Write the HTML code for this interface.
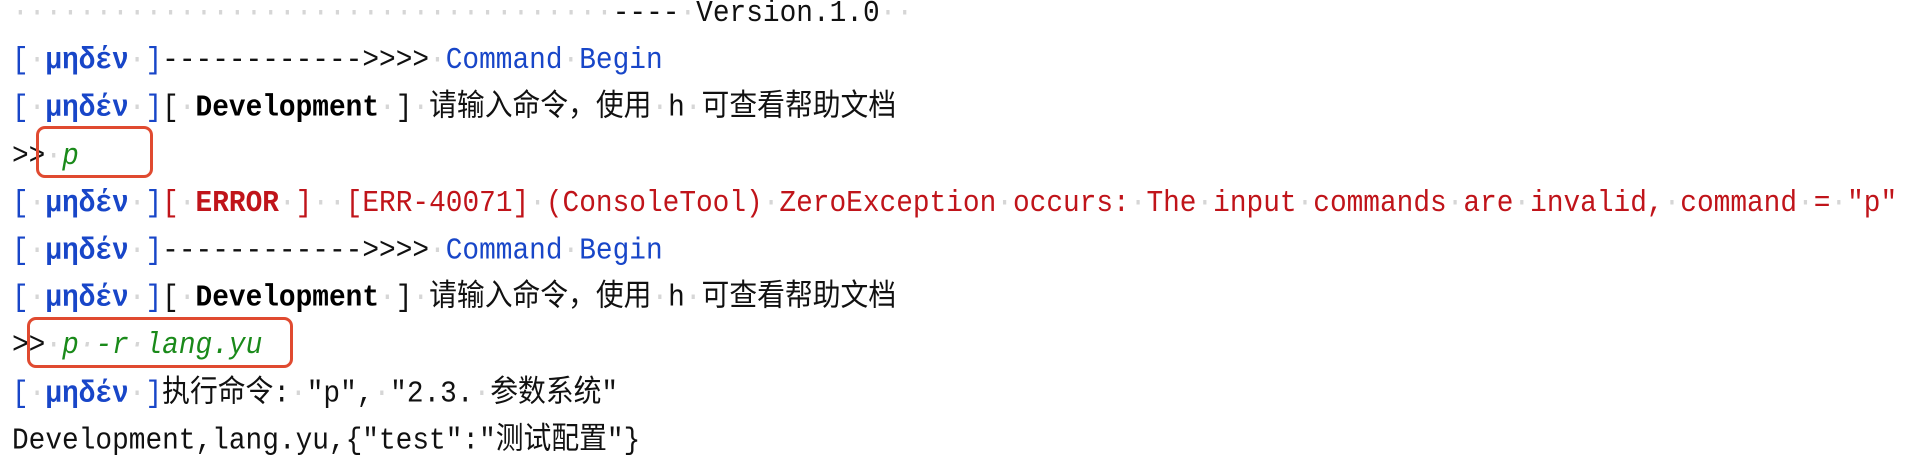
<!DOCTYPE html>
<html><head><meta charset="utf-8">
<style>
html,body{margin:0;padding:0;background:#fff;width:1906px;height:472px;overflow:hidden;position:relative}
#c{position:absolute;left:12px;top:-10px;font-family:"Liberation Mono","Noto Sans CJK SC",monospace;font-size:27.8px;line-height:43.2px;white-space:pre;color:#111;transform:scaleY(1.1);transform-origin:0 0}
.d{color:#d6d6d6}
.b{color:#1846c8}
.bb{color:#1846c8;font-weight:bold}
.k{font-weight:bold;color:#000}
.r{color:#c0141a}
.rb{color:#c0141a;font-weight:bold}
.g{color:#1a8a1a;font-style:italic}
.box{position:absolute;border:3.5px solid #e04a30;border-radius:9px;box-sizing:border-box}
</style></head><body>
<div id="c"><div>                                    ---- Version.1.0  </div><div><span class="b">[ </span><span class="bb">μηδέν</span><span class="b"> ]</span>------------&gt;&gt;&gt;&gt; <span class="b">Command Begin</span></div><div><span class="b">[ </span><span class="bb">μηδέν</span><span class="b"> ]</span>[ <span class="k">Development</span> ] 请输入命令，使用 h 可查看帮助文档</div><div>&gt;&gt; <span class="g">p</span></div><div><span class="b">[ </span><span class="bb">μηδέν</span><span class="b"> ]</span><span class="r">[ </span><span class="rb">ERROR</span><span class="r"> ]  [ERR-40071] (ConsoleTool) ZeroException occurs: The input commands are invalid, command = "p"</span></div><div><span class="b">[ </span><span class="bb">μηδέν</span><span class="b"> ]</span>------------&gt;&gt;&gt;&gt; <span class="b">Command Begin</span></div><div><span class="b">[ </span><span class="bb">μηδέν</span><span class="b"> ]</span>[ <span class="k">Development</span> ] 请输入命令，使用 h 可查看帮助文档</div><div>&gt;&gt; <span class="g">p -r lang.yu</span></div><div><span class="b">[ </span><span class="bb">μηδέν</span><span class="b"> ]</span>执行命令: "p", "2.3. 参数系统"</div><div>Development,lang.yu,{"test":"测试配置"}</div></div>
<div class="box" style="left:36px;top:126px;width:117px;height:52px"></div>
<div class="box" style="left:27px;top:317px;width:266px;height:51px"></div>
<script>
(function(){
 var w=document.createTreeWalker(document.getElementById('c'),NodeFilter.SHOW_TEXT,null,false),n,a=[];
 while(n=w.nextNode())a.push(n);
 a.forEach(function(t){
  if(t.nodeValue.indexOf(' ')<0)return;
  var f=document.createDocumentFragment();
  t.nodeValue.split(/( )/).forEach(function(p){
   if(p===' '){var s=document.createElement('span');s.className='d';s.textContent='·';f.appendChild(s);}
   else if(p)f.appendChild(document.createTextNode(p));
  });
  t.parentNode.replaceChild(f,t);
 });
})();
</script>
</body></html>
